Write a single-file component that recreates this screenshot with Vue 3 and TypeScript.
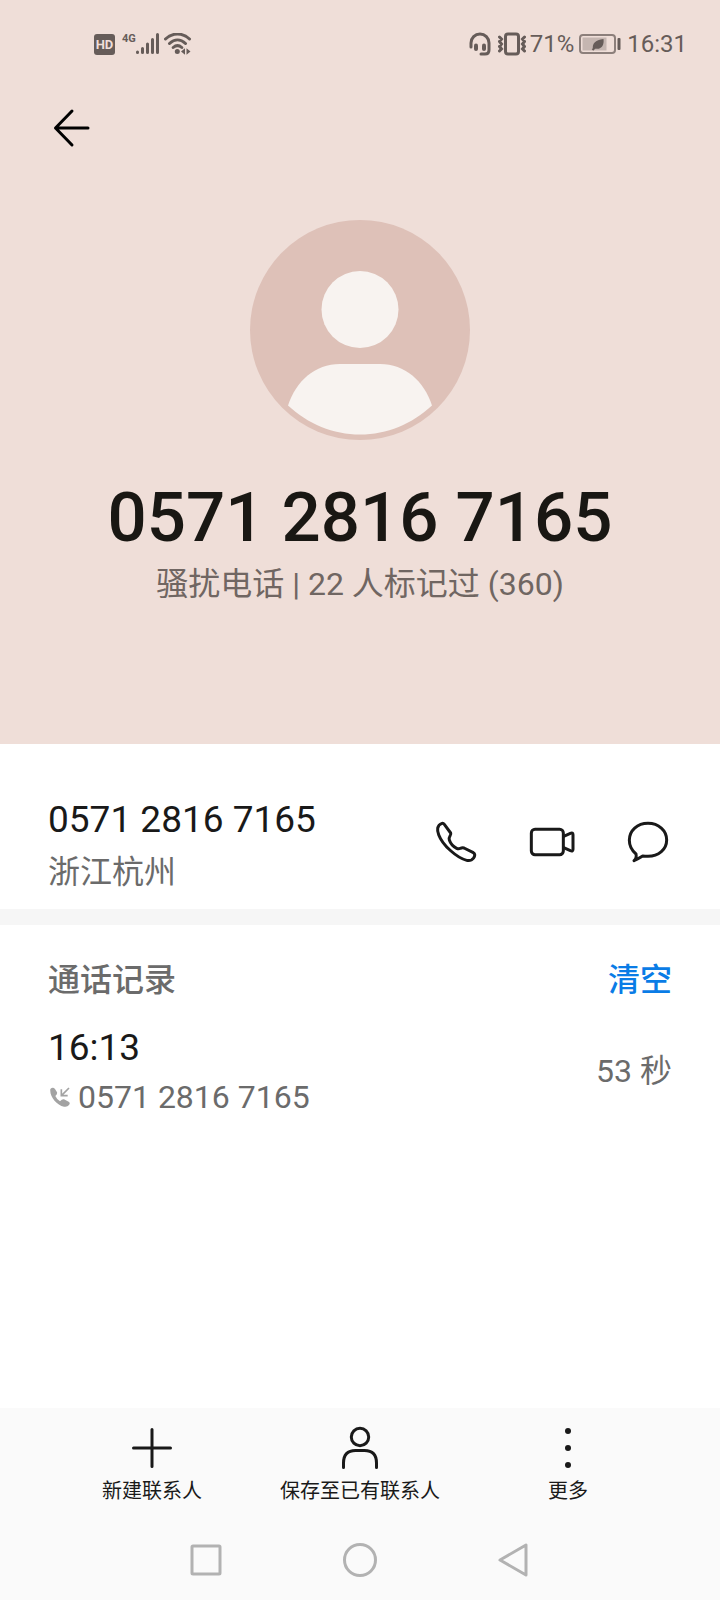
<script setup lang="ts">
import { ref } from 'vue'

interface CallRecord {
  time: string
  number: string
  duration: string
}

const phoneNumber = '0571 2816 7165'
const calls = ref<CallRecord[]>([{ time: '16:13', number: phoneNumber, duration: '53 秒' }])

function clearCalls(): void {
  calls.value = []
}
</script>

<template>
  <div class="screen">
    <header class="hero">
      <div class="status">
        <div class="status-left">
          <span class="hd">HD</span>
          <span class="network">4G</span>
          <svg class="signal" width="24" height="22" viewBox="0 0 24 22" aria-hidden="true">
            <path d="M1.500 19v.5M6.500 15.500v4M11.500 11v8.500M16.500 6.500v13M21.500 1.500v18" />
          </svg>
          <svg class="wifi" width="28" height="22" viewBox="0 0 28 22" aria-hidden="true">
            <path class="line" d="M1.500 6C8.500-.6 18.500-.6 25.500 6M5.500 10.500C10.500 5.700 16.500 5.700 21.500 10.500M9.200 14.500C12 12 15 12 17.800 14.500" />
            <circle cx="13.300" cy="18.500" r="2.500" />
            <path d="M17 18.500l4-3.300v6.600zM26.500 18.500l-4-3.300v6.600z" />
          </svg>
        </div>
        <div class="status-right">
          <svg width="22" height="24" viewBox="0 0 22 24" aria-hidden="true">
            <path class="stroke" d="M2 15v-4a9 9 0 0 1 18 0v7q0 4-4 4h-4" />
            <rect x="5" y="11.500" width="4" height="7.500" rx="2" />
            <rect x="13" y="11.500" width="4" height="7.500" rx="2" />
          </svg>
          <svg class="vibrate" width="28" height="24" viewBox="0 0 28 24" aria-hidden="true">
            <rect class="stroke" x="7.500" y="2" width="13" height="20" rx="2.500" />
            <path class="stroke thin" d="M1.500 5l2 2-2 2.500 2 2.500-2 2.500 2 2.500-2 2M26.500 5l-2 2 2 2.500-2 2.500 2 2.500-2 2.500 2 2" />
          </svg>
          <span class="percent">71%</span>
          <svg class="battery" width="42" height="20" viewBox="0 0 42 20" aria-hidden="true">
            <rect class="shell" x="1" y="1" width="35" height="18" rx="3" />
            <rect class="charge" x="3.500" y="3.500" width="24" height="13" />
            <path d="M14 15.500c-1-6 2-9.500 10.500-10.500 1 7-3 11-8 9.500z" />
            <path class="vein" d="M13.500 16l3-3" />
            <rect x="38.500" y="4" width="3" height="12" rx="1" />
          </svg>
          <time class="clock">16:31</time>
        </div>
      </div>

      <nav class="topbar">
        <button class="back" type="button" aria-label="返回">
          <svg width="40" height="40" viewBox="0 0 40 40">
            <path d="M20 3L3.500 20l16.500 17M3.500 20H36" />
          </svg>
        </button>
      </nav>

      <svg class="avatar" width="220" height="220" viewBox="0 0 220 220" aria-hidden="true">
        <circle cx="110" cy="110" r="110" class="disc" />
        <circle cx="110" cy="89.500" r="38.500" />
        <path d="M38 185.500C46 161 65 144 90 144h40c25 0 44 17 52 41.500C162 204 137 214.500 110 214.500S58 204 38 185.500z" />
      </svg>
      <h1 class="title">{{ phoneNumber }}</h1>
      <p class="tag">骚扰电话 | 22 人标记过 (360)</p>
    </header>

    <main class="content">
      <section class="contact">
        <div class="contact-text">
          <div class="primary">{{ phoneNumber }}</div>
          <div class="secondary place">浙江杭州</div>
        </div>
        <div class="actions">
          <button type="button" aria-label="拨打电话">
            <svg width="42" height="42" viewBox="45 63 126 126">
              <path d="M66 70q4-1 7 3l19 26q2 4-2 9-4 6-2 12c3 9 12 20 22 25q6 3 11 0 6-3 11-1l28 14q5 3 4 9-1 8-10 13-6 3-14 1c-30-8-72-45-84-77-5-12-6-29 10-34z" />
            </svg>
          </button>
          <button type="button" aria-label="视频通话">
            <svg width="46" height="42" viewBox="327 63 138 126">
              <rect x="334" y="88" width="96" height="76" rx="11" />
              <path d="M431 109l20-9q8-3 8 4v44q0 7-8 4l-20-9" />
            </svg>
          </button>
          <button type="button" aria-label="发送信息">
            <svg width="42" height="42" viewBox="621 63 126 126">
              <path d="M642 182q9-7 6-20c-12-10-20-22-20-41 0-29 24-51 56-51s56 22 56 50-24 49-56 49q-10 0-16-1-11 7-26 14z" />
            </svg>
          </button>
        </div>
      </section>

      <section class="log">
        <div class="log-head">
          <h2>通话记录</h2>
          <button class="clear" type="button" @click="clearCalls">清空</button>
        </div>
        <ul class="records">
          <li v-for="call in calls" :key="call.time" class="record">
            <div>
              <div class="primary">{{ call.time }}</div>
              <div class="secondary incoming">
                <svg width="22" height="22" viewBox="54 433 66 66" aria-hidden="true">
                  <path d="M61 442q8-8 14 0l6 10q2 5-5 11 5 11 14 16 7-8 12-6l14 7q6 4 1 10-5 7-15 5C80 490 58 464 61 442z" />
                  <path class="arrow" d="M117 439L95 461M94 443v19h19" />
                </svg>
                <span>{{ call.number }}</span>
              </div>
            </div>
            <span class="secondary">{{ call.duration }}</span>
          </li>
        </ul>
      </section>
    </main>

    <footer class="footer">
      <div class="toolbar">
        <button type="button">
          <svg width="44" height="44" viewBox="0 0 44 44" aria-hidden="true">
            <path d="M22 3.500v37M3.500 22h37" />
          </svg>
          <span>新建联系人</span>
        </button>
        <button type="button">
          <svg width="44" height="44" viewBox="0 0 44 44" aria-hidden="true">
            <circle cx="22" cy="11" r="8.700" />
            <path d="M5.500 41.500V37q0-12.500 12-12.500h9q12 0 12 12.500v4.500" />
          </svg>
          <span>保存至已有联系人</span>
        </button>
        <button type="button">
          <svg class="dots" width="44" height="44" viewBox="0 0 44 44" aria-hidden="true">
            <circle cx="22" cy="5" r="3" />
            <circle cx="22" cy="22" r="3" />
            <circle cx="22" cy="39" r="3" />
          </svg>
          <span>更多</span>
        </button>
      </div>
      <nav class="system">
        <button type="button" aria-label="最近任务">
          <svg width="36" height="36" viewBox="0 0 36 36"><rect x="4" y="4" width="28" height="28" rx="1" /></svg>
        </button>
        <button type="button" aria-label="主屏幕">
          <svg width="36" height="36" viewBox="0 0 36 36"><circle cx="18" cy="18" r="15.500" /></svg>
        </button>
        <button type="button" aria-label="返回上一页">
          <svg width="36" height="36" viewBox="0 0 36 36"><path d="M4 18L30 3v30z" /></svg>
        </button>
      </nav>
    </footer>
  </div>
</template>

<style>
body {
  margin: 0;
  background: #fff;
}
</style>

<style scoped>
.screen {
  display: flex;
  flex-direction: column;
  min-height: 100vh;
  background: #fff;
  color: #191919;
  font-family: Roboto, "Noto Sans CJK SC", sans-serif;
}

button {
  display: flex;
  align-items: center;
  justify-content: center;
  padding: 0;
  border: 0;
  background: none;
  color: inherit;
  font: inherit;
  cursor: pointer;
}

svg {
  display: block;
  flex: none;
}

.hero {
  display: flex;
  flex-direction: column;
  align-items: center;
  padding-bottom: 136px;
  background: #efded8;
}

.status {
  display: flex;
  align-items: center;
  justify-content: space-between;
  align-self: stretch;
  height: 88px;
  padding: 0 33px 0 94px;
  box-sizing: border-box;
  color: #665c59;
  fill: #665c59;
}

.status-left,
.status-right {
  display: flex;
  align-items: center;
}

.hd {
  width: 21px;
  border-radius: 3px;
  background: #665c59;
  color: #efded8;
  font-size: 13px;
  font-weight: 700;
  line-height: 21px;
  text-align: center;
}

.network {
  align-self: flex-start;
  margin-left: 7px;
  font-size: 11px;
  font-weight: 700;
  line-height: 12px;
}

.signal {
  margin-right: 4px;
  fill: none;
  stroke: #665c59;
  stroke-width: 3;
  stroke-linecap: round;
}

.wifi .line {
  fill: none;
  stroke: #665c59;
  stroke-width: 3;
  stroke-linecap: round;
}

.stroke {
  fill: none;
  stroke: #665c59;
  stroke-width: 3;
  stroke-linecap: round;
}

.vibrate {
  margin: 0 4px 0 7px;
}

.percent,
.clock {
  font-size: 24px;
  line-height: 32px;
}

.battery {
  margin: 0 6px 0 5px;
}

.shell {
  fill: none;
  stroke: #8c7f7b;
  stroke-width: 2;
}

.charge {
  fill: #c5b6b1;
}

.vein {
  stroke: #665c59;
  stroke-width: 2;
}

.topbar {
  display: flex;
  align-items: center;
  align-self: stretch;
  height: 80px;
  padding: 0 52px;
  margin-bottom: 52px;
}

.back svg {
  fill: none;
  stroke: #000;
  stroke-width: 3;
  stroke-linecap: round;
  stroke-linejoin: round;
}

.avatar {
  fill: #f8f3f0;
}

.avatar .disc {
  fill: #dec1b8;
}

.title {
  margin: 38px 0 2px;
  color: #191713;
  font-size: 69px;
  font-weight: 500;
  line-height: 80px;
}

.tag {
  margin: 0;
  color: #706662;
  font-size: 32px;
  line-height: 48px;
}

.content {
  flex: 1;
}

.contact {
  display: flex;
  align-items: flex-start;
  justify-content: space-between;
  padding: 50px 24px 13px 48px;
  border-bottom: 16px solid #f6f6f6;
}

.contact-text {
  padding-top: 2px;
}

.primary {
  font-size: 37px;
  line-height: 48px;
}

.secondary {
  color: #6b6b6b;
  font-size: 32px;
  line-height: 48px;
}

.place {
  margin-top: 4px;
}

.actions {
  display: flex;
}

.actions button {
  width: 96px;
  height: 96px;
}

.actions svg {
  fill: none;
  stroke: #191919;
  stroke-width: 9;
  stroke-linecap: round;
  stroke-linejoin: round;
}

.log {
  padding: 31px 48px 40px;
}

.log-head {
  display: flex;
  justify-content: space-between;
  margin-bottom: 20px;
  font-size: 32px;
  font-weight: 500;
  line-height: 48px;
}

.log-head h2 {
  margin: 0;
  color: #6b6b6b;
  font: inherit;
}

.clear {
  color: #0a7ce6;
}

.records {
  margin: 0;
  padding: 0;
  list-style: none;
}

.record {
  display: flex;
  align-items: center;
  justify-content: space-between;
}

.incoming {
  display: flex;
  align-items: center;
  gap: 8px;
  padding-top: 1px;
}

.record > .secondary {
  padding-bottom: 4px;
}

.incoming svg {
  fill: #a3a3a3;
}

.incoming .arrow {
  fill: none;
  stroke: #a3a3a3;
  stroke-width: 5;
}

.footer {
  background: #fafafa;
}

.toolbar {
  display: grid;
  grid-template-columns: repeat(3, 1fr);
  padding: 18px 48px 15px;
}

.toolbar button {
  flex-direction: column;
  gap: 7px;
  font-size: 20px;
  line-height: 28px;
  white-space: nowrap;
}

.toolbar svg {
  fill: none;
  stroke: #191919;
  stroke-width: 3;
  stroke-linecap: round;
}

.toolbar .dots {
  fill: #191919;
  stroke: none;
}

.system {
  display: flex;
  justify-content: center;
  height: 80px;
}

.system button {
  width: 154px;
}

.system svg {
  fill: none;
  stroke: #b2b2b2;
  stroke-width: 3;
  stroke-linejoin: round;
}
</style>
